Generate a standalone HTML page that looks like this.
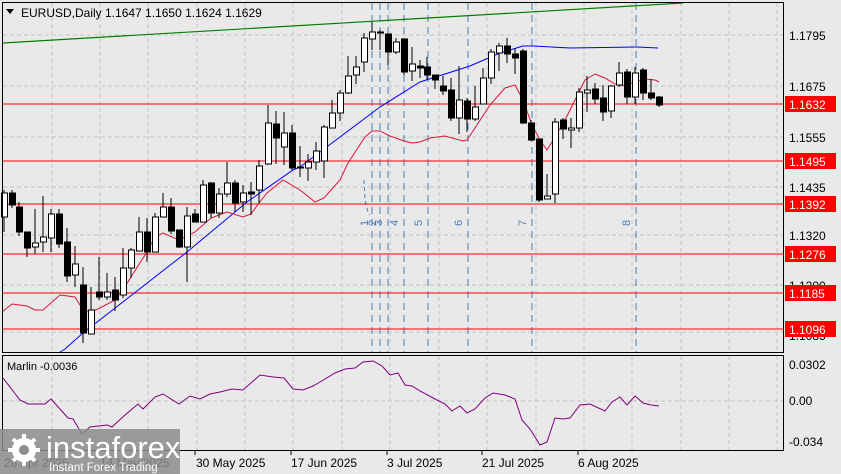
<!DOCTYPE html>
<html><head><meta charset="utf-8"><style>
html,body{margin:0;padding:0;background:#e9e9e9;width:841px;height:474px;overflow:hidden}
svg{display:block;font-family:"Liberation Sans",sans-serif}
</style></head><body>
<svg width="841" height="474" viewBox="0 0 841 474" xmlns="http://www.w3.org/2000/svg">
<rect width="841" height="474" fill="#e9e9e9"/>
<!-- grid -->
<g stroke="#c4c4c4" stroke-dasharray="4,3" stroke-width="1" shape-rendering="crispEdges">
<path d="M52 3V352M100 3V352M148 3V352M197 3V352M245 3V352M293 3V352M342 3V352M390 3V352M439 3V352M487 3V352M536 3V352M584 3V352M632 3V352M681 3V352M729 3V352M777 3V352"/>
<path d="M52 356V450M100 356V450M148 356V450M197 356V450M245 356V450M293 356V450M342 356V450M390 356V450M439 356V450M487 356V450M536 356V450M584 356V450M632 356V450M681 356V450M729 356V450M777 356V450"/>
<path d="M3 35H783M3 86H783M3 137H783M3 187H783M3 235H783M3 285H783M3 332H783M3 401H783"/>
</g>
<!-- event lines -->
<g stroke="#4a7fb5" stroke-dasharray="7,5" stroke-width="1" shape-rendering="crispEdges">
<path d="M372 3V352M380 3V352M388 3V352M404 3V352M428 3V352M468 3V352M532 3V352M636 3V352"/>
</g>
<path d="M364 180 L365 200 L368 212 L370 215" stroke="#4a7fb5" fill="none" stroke-dasharray="4,3"/>
<g fill="#4a7fb5" font-size="11">
<text transform="translate(368,226) rotate(-90)">1</text>
<text transform="translate(376,226) rotate(-90)">2</text>
<text transform="translate(382,226) rotate(-90)">3</text>
<text transform="translate(398,226) rotate(-90)">4</text>
<text transform="translate(422,226) rotate(-90)">5</text>
<text transform="translate(462,226) rotate(-90)">6</text>
<text transform="translate(526,226) rotate(-90)">7</text>
<text transform="translate(630,226) rotate(-90)">8</text>
</g>
<!-- horizontal levels -->
<g stroke="#ff0000" stroke-width="1.3" shape-rendering="crispEdges">
<path d="M3 104H783M3 161H783M3 204H783M3 254H783M3 293H783M3 329H783"/>
</g>
<!-- green line -->
<path d="M3 43 L683 3" stroke="#008000" stroke-width="1.2" fill="none"/>
<!-- blue MA -->
<polyline fill="none" stroke="#0000ff" stroke-width="1" points="60,352 65,349 83,333 187,252 247,202 293,170 300,167 380,107 420,82 470,66 500,53 523,46 533,46 570,48 637,47 658,48"/>
<!-- red MA -->
<polyline fill="none" stroke="#dc143c" stroke-width="1" points="2,312 12,304 27,306 35,310 43,310 60,295 75,297 83,310 91,312 100,308 115,300 123,290 131,277 145,255 155,237 163,233 179,240 195,232 211,218 227,212 243,217 251,214 259,203 267,193 283,180 300,190 315,202 324,198 340,180 348,163 365,137 372,131 380,131 390,136 404,141 412,143 420,142 430,138 445,136 463,141 467,140 475,128 490,105 505,88 515,85 523,100 532,125 540,140 547,150 555,137 565,120 575,100 585,80 595,74 605,78 615,84 625,86 635,82 645,79 655,80 659,82"/>
<!-- candles wicks -->
<path stroke="#000" stroke-width="1" fill="none" shape-rendering="crispEdges" d="
M4 190V232M12 190V208M19 202V236M27 232V257M35 209V254M43 196V252M51 209V252M59 209V248M67 228V282M75 246V287M83 267V343M91 287V334M99 257V300M107 273V300M115 277V311M123 248V298M131 248V278M139 217V251M147 218V262M155 213V252M163 193V217M171 198V234M179 230V248M187 207V282M195 209V222M203 180V222M211 182V218M219 188V218M227 162V197M235 180V212M243 185V212M251 182V215M259 160V203M268 105V165M276 111V164M284 112V165M292 125V170M300 146V177M308 154V181M316 142V170M324 125V178M332 100V128M340 90V121M348 56V94M356 56V84M364 33V72M372 22V50M380 30V50M388 34V65M396 38V54M404 38V75M412 47V81M420 60V78M427 57V80M435 75V89M443 76V95M451 78V121M459 66V134M467 98V132M475 86V121M483 68V104M491 49V84M499 43V71M507 38V63M515 48V74M523 49V124M531 120V141M539 139V202M547 174V199M555 118V203M563 118V139M571 118V148M579 88V132M587 76V112M595 83V104M603 85V121M611 85V118M619 62V87M627 69V104M635 67V104M643 68V100M651 79V100M659 96V107"/>
<g stroke="#000" stroke-width="1" shape-rendering="crispEdges">
<g fill="#fff">
<rect x="1.5" y="193" width="6" height="24"/><rect x="32.5" y="243" width="6" height="4"/><rect x="40.5" y="237" width="6" height="5"/><rect x="48.5" y="214" width="6" height="24"/><rect x="72.5" y="264" width="6" height="11"/><rect x="88.5" y="310" width="6" height="24"/><rect x="104.5" y="292" width="6" height="5"/><rect x="120.5" y="268" width="6" height="27"/><rect x="128.5" y="250" width="6" height="18"/><rect x="136.5" y="232" width="6" height="19"/><rect x="152.5" y="217" width="6" height="35"/><rect x="160.5" y="207" width="6" height="10"/><rect x="184.5" y="216" width="6" height="31"/><rect x="200.5" y="185" width="6" height="37"/><rect x="216.5" y="194" width="6" height="19"/><rect x="224.5" y="183" width="6" height="11"/><rect x="240.5" y="193" width="6" height="9"/><rect x="256.5" y="166" width="6" height="24"/><rect x="265.5" y="123" width="6" height="41"/><rect x="281.5" y="133" width="6" height="14"/><rect x="305.5" y="162" width="6" height="6"/><rect x="313.5" y="151" width="6" height="11"/><rect x="321.5" y="127" width="6" height="34"/><rect x="329.5" y="113" width="6" height="15"/><rect x="337.5" y="93" width="6" height="20"/><rect x="345.5" y="76" width="6" height="17"/><rect x="353.5" y="67" width="6" height="8"/><rect x="361.5" y="38" width="6" height="24"/><rect x="369.5" y="32" width="6" height="7"/><rect x="393.5" y="42" width="6" height="10"/><rect x="409.5" y="64" width="6" height="7"/><rect x="456.5" y="100" width="6" height="18"/><rect x="472.5" y="107" width="6" height="12"/><rect x="480.5" y="78" width="6" height="26"/><rect x="488.5" y="52" width="6" height="26"/><rect x="496.5" y="46" width="6" height="7"/><rect x="544.5" y="196" width="6" height="3"/><rect x="552.5" y="122" width="6" height="72"/><rect x="568.5" y="128" width="6" height="2"/><rect x="576.5" y="92" width="6" height="36"/><rect x="584.5" y="90" width="6" height="3"/><rect x="608.5" y="86" width="6" height="25"/><rect x="616.5" y="73" width="6" height="12"/><rect x="632.5" y="73" width="6" height="24"/>
</g>
<g fill="#000">
<rect x="9.5" y="193" width="6" height="12"/><rect x="16.5" y="207" width="6" height="25"/><rect x="24.5" y="232" width="6" height="16"/><rect x="56.5" y="214" width="6" height="30"/><rect x="64.5" y="242" width="6" height="34"/><rect x="80.5" y="285" width="6" height="48"/><rect x="96.5" y="292" width="6" height="5"/><rect x="112.5" y="290" width="6" height="10"/><rect x="144.5" y="232" width="6" height="20"/><rect x="168.5" y="207" width="6" height="24"/><rect x="176.5" y="230" width="6" height="17"/><rect x="192.5" y="214" width="6" height="8"/><rect x="208.5" y="183" width="6" height="30"/><rect x="232.5" y="183" width="6" height="20"/><rect x="248.5" y="192" width="6" height="2"/><rect x="273.5" y="124" width="6" height="14"/><rect x="289.5" y="133" width="6" height="35"/><rect x="297.5" y="167" width="6" height="1"/><rect x="377.5" y="32" width="6" height="1"/><rect x="385.5" y="34" width="6" height="18"/><rect x="401.5" y="39" width="6" height="33"/><rect x="417.5" y="66" width="6" height="2"/><rect x="424.5" y="67" width="6" height="8"/><rect x="432.5" y="75" width="6" height="5"/><rect x="440.5" y="86" width="6" height="5"/><rect x="448.5" y="90" width="6" height="28"/><rect x="464.5" y="101" width="6" height="18"/><rect x="504.5" y="46" width="6" height="8"/><rect x="512.5" y="54" width="6" height="4"/><rect x="520.5" y="51" width="6" height="72"/><rect x="528.5" y="123" width="6" height="17"/><rect x="536.5" y="139" width="6" height="61"/><rect x="560.5" y="120" width="6" height="9"/><rect x="592.5" y="89" width="6" height="10"/><rect x="600.5" y="98" width="6" height="14"/><rect x="624.5" y="72" width="6" height="25"/><rect x="640.5" y="70" width="6" height="23"/><rect x="648.5" y="93" width="6" height="5"/><rect x="656.5" y="97" width="6" height="8"/>
</g>
</g>
<!-- frames -->
<g fill="none" stroke="#000" stroke-width="1" shape-rendering="crispEdges">
<rect x="2.5" y="2.5" width="781" height="350"/>
<rect x="2.5" y="355.5" width="781" height="95"/>
</g>
<!-- title -->
<path d="M6 9 L14 9 L10 14 Z" fill="#000"/>
<text x="21" y="17" font-size="12" fill="#000">EURUSD,Daily  1.1647 1.1650 1.1624 1.1629</text>
<!-- axis labels -->
<g font-size="12" fill="#000">
<text x="789" y="40">1.1795</text>
<text x="789" y="91">1.1675</text>
<text x="789" y="142">1.1555</text>
<text x="789" y="192">1.1435</text>
<text x="789" y="240">1.1320</text>
<text x="789" y="290">1.1200</text>
<text x="789" y="340">1.1085</text>
<text x="789" y="369">0.0302</text>
<text x="789" y="405">0.00</text>
<text x="789" y="446">-0.034</text>
</g>
<g shape-rendering="crispEdges" fill="#ff0000">
<rect x="785" y="96" width="51" height="16"/><rect x="785" y="153" width="51" height="16"/><rect x="785" y="196" width="51" height="16"/><rect x="785" y="246" width="51" height="16"/><rect x="785" y="285" width="51" height="16"/><rect x="785" y="321" width="51" height="16"/>
</g>
<g font-size="12" fill="#fff">
<text x="789" y="109">1.1632</text><text x="789" y="166">1.1495</text><text x="789" y="209">1.1392</text><text x="789" y="259">1.1276</text><text x="789" y="298">1.1185</text><text x="789" y="334">1.1096</text>
</g>
<!-- marlin -->
<text x="7" y="370" font-size="11" fill="#000">Marlin -0.0036</text>
<polyline fill="none" stroke="#800080" stroke-width="1" points="3,378 20,400 28,404 45,404 51,399 68,418 73,419 82,434 90,427 107,425 112,427 125,415 138,404 143,409 155,397 163,394 179,404 190,396 200,399 210,394 220,392 232,389 243,390 260,375 273,377 284,378 293,389 303,390 313,386 320,382 335,373 345,369 355,368 363,362 373,361 382,366 390,375 398,373 405,385 412,386 420,391 435,399 445,404 452,411 460,406 467,413 475,409 485,398 493,393 505,395 515,399 522,420 530,429 540,445 547,442 555,418 563,419 570,418 580,405 590,404 605,411 612,402 620,397 627,405 635,396 643,403 651,405 659,406"/>
<!-- dates -->
<g font-size="12" fill="#000">
<text x="4" y="467">28 Apr 2025</text>
<text x="100" y="467">14 May 2025</text>
<text x="196" y="467">30 May 2025</text>
<text x="291" y="467">17 Jun 2025</text>
<text x="387" y="467">3 Jul 2025</text>
<text x="482" y="467">21 Jul 2025</text>
<text x="578" y="467">6 Aug 2025</text>
</g>
<path d="M195 451V455M291 451V455M387 451V455M482 451V455M578 451V455" stroke="#000"/>
<!-- logo -->
<rect x="0" y="429" width="180" height="45" fill="#8c8c8c" opacity="0.85"/>
<g fill="#fff">
<circle cx="24" cy="450" r="12"/>
<g stroke="#fff" stroke-width="4"><path d="M24 434V466M8 450H40M13 439L35 461M35 439L13 461"/></g>
<circle cx="24" cy="450" r="5" fill="#8c8c8c"/>
<text x="46" y="458" font-size="31">instaforex</text>
<text x="49" y="471" font-size="11.5">Instant Forex Trading</text>
</g>
</svg>
</body></html>
